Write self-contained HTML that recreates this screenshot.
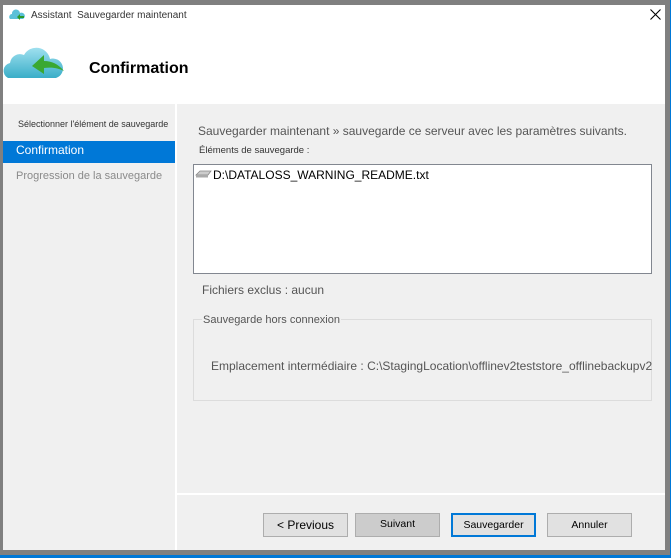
<!DOCTYPE html>
<html><head><style>
body{margin:0;width:671px;height:558px;background:#808080;position:relative;overflow:hidden;font-family:"Liberation Sans",sans-serif;}
.a{position:absolute}
.btn{position:absolute;top:513px;width:83px;height:22px;border:1px solid #adadad;background:#e1e1e1;font-size:10.5px;display:flex;align-items:center;justify-content:center;color:#000}
</style></head><body>
<div class="a" style="left:670px;top:0;width:1px;height:558px;background:#0078d7"></div>
<div class="a" style="left:0;top:555px;width:671px;height:3px;background:#0078d7"></div>
<div class="a" style="left:3px;top:5px;width:662px;height:545px;background:#fff"></div>
<div class="a" style="left:3px;top:104px;width:172px;height:446px;background:#f0f0f0"></div>
<div class="a" style="left:177px;top:104px;width:488px;height:389px;background:#f0f0f0"></div>
<div class="a" style="left:177px;top:495px;width:488px;height:55px;background:#f0f0f0"></div>
<!-- title -->
<svg class="a" style="left:8px;top:9px" width="20" height="12" viewBox="0 0 20 12"><path d="M2 10a3 3 0 0 1 2-5a4 4 0 0 1 8-1a3 3 0 0 1 3 6z" fill="#5bc0d8"/><path d="M9 8l3-3v2h4v2h-4v2z" fill="#2a9a2a"/></svg>
<div class="a" style="left:31px;top:10px;font-size:10px;color:#333">Assistant&nbsp; Sauvegarder maintenant</div>
<svg class="a" style="left:650px;top:9px" width="11" height="11"><path d="M0.5 0.5L10.5 10.5M10.5 0.5L0.5 10.5" stroke="#000" stroke-width="1.1"/></svg>
<!-- big icon -->
<svg class="a" style="left:2px;top:42px" width="66" height="40" viewBox="0 0 66 40">
<defs><linearGradient id="g" x1="0" y1="0" x2="0" y2="1"><stop offset="0" stop-color="#9fe0ef"/><stop offset="1" stop-color="#3aaec8"/></linearGradient></defs>
<path d="M6 36a8 8 0 0 1 2-15a10 10 0 0 1 14-8a14 14 0 0 1 26 4a9 9 0 0 1 6 19z" fill="url(#g)"/>
<path d="M30 24l12-11v6c8 0 14 3 20 10c-6-3-12-4-20-3v6z" fill="#3aa832"/></svg>
<div class="a" style="left:89px;top:60px;font-size:16px;font-weight:bold;color:#000">Confirmation</div>
<!-- sidebar -->
<div class="a" style="left:18px;top:119px;font-size:9px;color:#333;white-space:nowrap">Sélectionner l'élément de sauvegarde</div>
<div class="a" style="left:3px;top:141px;width:172px;height:22px;background:#0078d7"></div>
<div class="a" style="left:16px;top:143px;font-size:12px;color:#fff">Confirmation</div>
<div class="a" style="left:16px;top:170px;font-size:11px;color:#8a8a8a">Progression de la sauvegarde</div>
<!-- content -->
<div class="a" style="left:198px;top:124px;font-size:12px;color:#555">Sauvegarder maintenant » sauvegarde ce serveur avec les paramètres suivants.</div>
<div class="a" style="left:199px;top:145px;font-size:9.5px;color:#333">Éléments de sauvegarde :</div>
<div class="a" style="left:193px;top:164px;width:457px;height:108px;border:1px solid #828790;background:#fff"></div>
<svg class="a" style="left:195px;top:170px" width="17" height="8"><path d="M1 5l4-4h11l-3 4z" fill="#ccc" stroke="#888" stroke-width=".8"/><rect x="1" y="5" width="12" height="2.5" fill="#aaa"/></svg>
<div class="a" style="left:213px;top:168px;font-size:12px;color:#000">D:\DATALOSS_WARNING_README.txt</div>
<div class="a" style="left:202px;top:283px;font-size:12px;color:#555">Fichiers exclus : aucun</div>
<div class="a" style="left:193px;top:319px;width:457px;height:80px;border:1px solid #dcdcdc"></div>
<div class="a" style="left:202px;top:314px;font-size:11px;color:#555;background:#f0f0f0;padding:0 1px">Sauvegarde hors connexion</div>
<div class="a" style="left:211px;top:359px;font-size:12px;color:#555;white-space:nowrap;width:454px;overflow:hidden">Emplacement intermédiaire : C:\StagingLocation\offlinev2teststore_offlinebackupv2</div>
<!-- buttons -->
<div class="btn" style="left:263px;font-size:12px">&lt; Previous</div>
<div class="btn" style="left:355px;background:#cccccc;align-items:flex-start;padding-top:4px;height:18px">Suivant</div>
<div class="btn" style="left:451px;width:81px;height:20px;border:2px solid #0078d7">Sauvegarder</div>
<div class="btn" style="left:547px">Annuler</div>
</body></html>
